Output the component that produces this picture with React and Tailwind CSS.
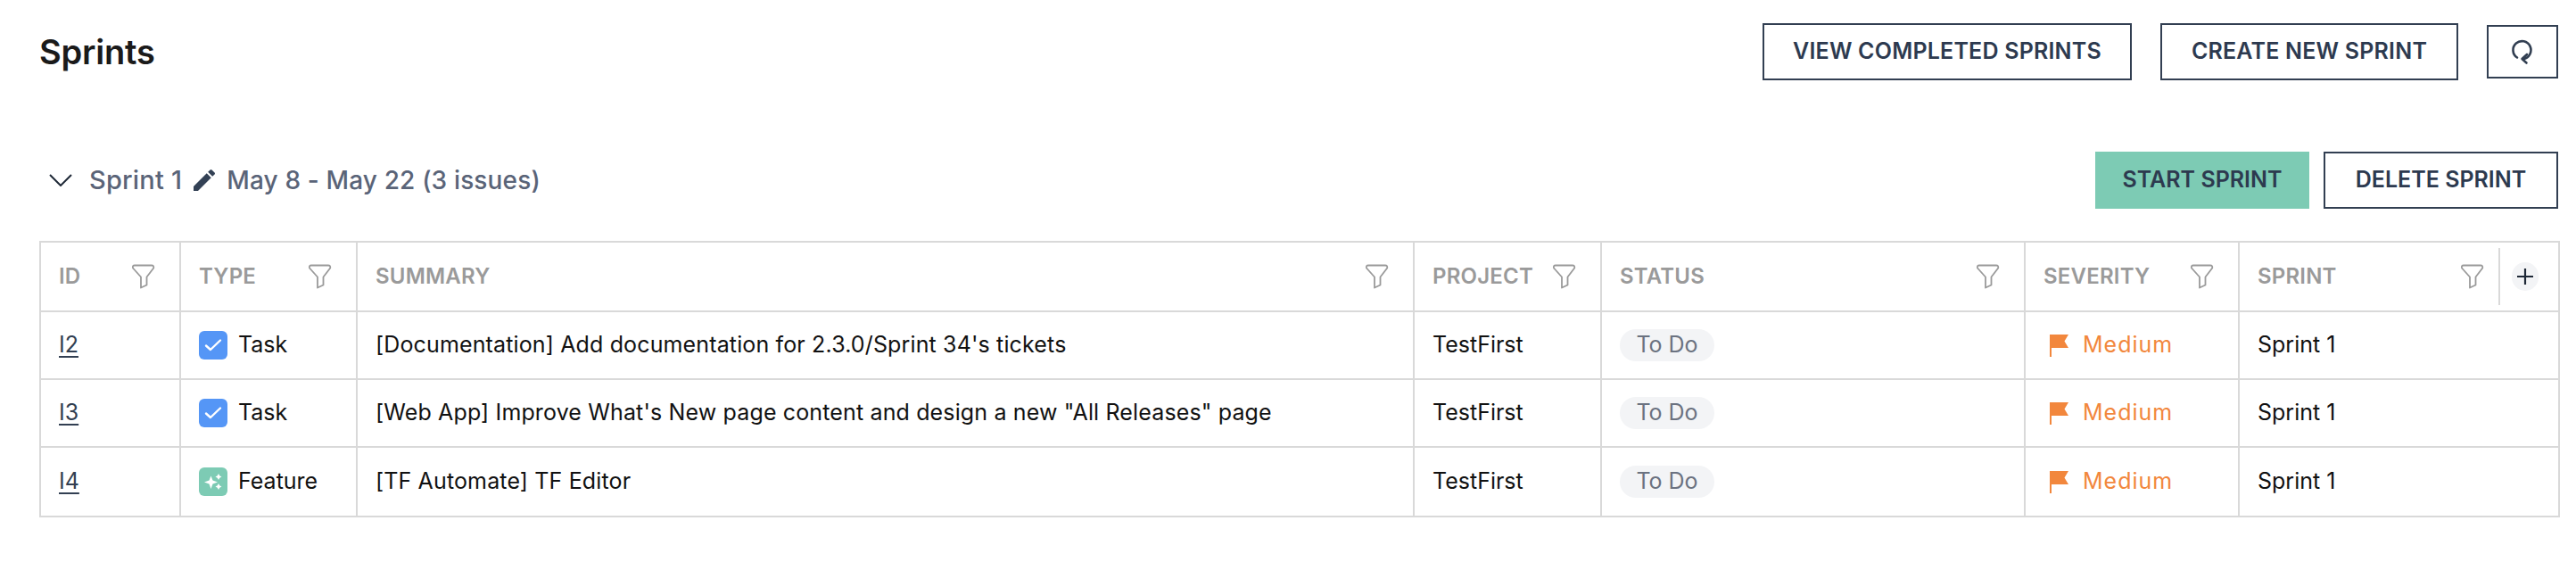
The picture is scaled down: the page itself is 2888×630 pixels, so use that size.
import React from 'react';

const rows = [
    { id: 'I2', type: 'Task', summary: "[Documentation] Add documentation for 2.3.0/Sprint 34's tickets" },
    { id: 'I3', type: 'Task', summary: `[Web App] Improve What's New page content and design a new "All Releases" page` },
    { id: 'I4', type: 'Feature', summary: '[TF Automate] TF Editor' },
];

const FilterIcon = () => (
    <svg width="27" height="28" viewBox="0 0 27 28" fill="none" stroke="#9a9a9a" strokeWidth="1.8" strokeLinejoin="round" className="shrink-0">
        <path d="M4 1.5H23Q25.8 1.5 25.2 4.5L17.5 14.5V23.5L11 26.5V14.5L2 4.5Q1.2 1.5 4 1.5Z" />
    </svg>
);

const TaskIcon = () => (
    <span className="w-8 h-8 rounded-md bg-[#5596f6] flex items-center justify-center shrink-0">
        <svg width="20" height="16" viewBox="0 0 20 16" fill="none" stroke="#fff" strokeWidth="2.4" strokeLinecap="round" strokeLinejoin="round">
            <path d="M2 8.5L7 13L18 2.5" />
        </svg>
    </span>
);

const FeatureIcon = () => (
    <span className="w-8 h-8 rounded-md bg-[#7dcbb4] flex items-center justify-center shrink-0">
        <svg width="20" height="18" viewBox="0 0 20 18" fill="#fff">
            <path d="M7.5 2.5L9.5 7.5L15 9.5L9.5 11.5L7.5 17L5.5 11.5L0 9.5L5.5 7.5Z" />
            <path d="M16 0L17.2 2.3L19.5 3.5L17.2 4.7L16 7L14.8 4.7L12.5 3.5L14.8 2.3Z" />
            <path d="M16 11L17.2 13.3L19.5 14.5L17.2 15.7L16 18L14.8 15.7L12.5 14.5L14.8 13.3Z" />
        </svg>
    </span>
);

const FlagIcon = () => (
    <svg width="21" height="25" viewBox="0 0 21 25" fill="#f2873d" className="shrink-0">
        <path d="M0 0H21L16.5 7.5L21 15H2V25H0Z" />
    </svg>
);

const HeaderCell = ({ label, last }) => (
    <th className="border-2 border-[#d9d9d9] p-0 font-semibold">
        <div className={`h-[76px] flex items-center justify-between ${last ? 'pl-[20px] pr-[0px]' : 'pl-[20px] pr-[27px]'}`}>
            <span className="text-[24px] text-[#9a9a9a] tracking-[0.2px]">{label}</span>
            <div className="flex items-center">
                <FilterIcon />
                {last && (
                    <div className="flex items-center h-16 ml-4 pl-[13px] pr-[22px] border-l-2 border-[#d9d9d9]">
                        <span className="w-[30px] h-8 rounded-full bg-gray-100 flex items-center justify-center">
                            <svg width="18" height="18" viewBox="0 0 18 18" stroke="#1f2937" strokeWidth="2.2">
                                <path d="M9 0V18M0 9H18" />
                            </svg>
                        </span>
                    </div>
                )}
            </div>
        </div>
    </th>
);

const OutlineButton = ({ width, children }) => (
    <button className={`h-16 ${width} border-2 border-[#323f52] text-[#2d3a4f] text-[25px] font-semibold tracking-[0.2px] uppercase`}>
        {children}
    </button>
);

export default function App() {
    return (
        <div className="w-[2888px] h-[630px] bg-white pl-11 pr-5 pt-[26px] font-['Inter',sans-serif] overflow-hidden">
            <div className="flex items-center justify-between">
                <h1 className="text-[38px] font-semibold text-[#1a1a1a] tracking-[-0.2px]">Sprints</h1>
                <div className="flex items-center gap-8">
                    <OutlineButton width="w-[414px]">View completed sprints</OutlineButton>
                    <OutlineButton width="w-[334px]">Create new sprint</OutlineButton>
                    <button className="w-20 h-[60px] border-2 border-[#323f52] flex items-center justify-center">
                        <svg width="26" height="30" viewBox="0 0 26 30" fill="none" stroke="#323f52" strokeWidth="2.6" strokeLinecap="round" strokeLinejoin="round">
                            <path d="M7 21.5A10 10 0 1 1 14 23" />
                            <path d="M18 18L12.5 23L17.5 27.5" />
                        </svg>
                    </button>
                </div>
            </div>

            <div className="flex items-center justify-between mt-20 mb-9 h-16">
                <div className="flex items-center pl-[11px]">
                    <svg width="26" height="14" viewBox="0 0 26 14" fill="none" stroke="#1f2937" strokeWidth="2" className="mr-[19px]">
                        <path d="M1 1L13 13L25 1" />
                    </svg>
                    <span className="text-[29px] font-medium text-[#5a6478] tracking-[0.2px]">Sprint 1</span>
                    <svg width="32" height="32" viewBox="0 0 24 24" fill="#334155" className="ml-[9px] mr-[9px]">
                        <path d="M3 17.25V21h3.75L17.81 9.94l-3.75-3.75L3 17.25zM20.71 7.04c.39-.39.39-1.02 0-1.41l-2.34-2.34a.9959.9959 0 0 0-1.41 0l-1.83 1.83 3.75 3.75 1.83-1.83z" />
                    </svg>
                    <span className="text-[28px] font-medium text-[#5a6478] tracking-[0.15px]">May 8 - May 22 (3 issues)</span>
                </div>
                <div className="flex items-center gap-4">
                    <button className="h-16 w-[240px] bg-[#7dcbb4] text-[#2d3a4f] text-[25px] font-semibold uppercase">Start sprint</button>
                    <button className="h-16 w-[263px] border-2 border-[#323f52] text-[#2d3a4f] text-[25px] font-semibold uppercase">Delete sprint</button>
                </div>
            </div>

            <table className="w-[2824px] table-fixed border-collapse text-left">
                <colgroup>
                    <col className="w-[157px]" />
                    <col className="w-[198px]" />
                    <col className="w-[1185px]" />
                    <col className="w-[210px]" />
                    <col className="w-[475px]" />
                    <col className="w-[240px]" />
                    <col className="w-[359px]" />
                </colgroup>
                <thead>
                    <tr>
                        <HeaderCell label="ID" />
                        <HeaderCell label="TYPE" />
                        <HeaderCell label="SUMMARY" />
                        <HeaderCell label="PROJECT" />
                        <HeaderCell label="STATUS" />
                        <HeaderCell label="SEVERITY" />
                        <HeaderCell label="SPRINT" last />
                    </tr>
                </thead>
                <tbody>
                    {rows.map((row, idx) => (
                        <tr key={row.id} className={`text-[25px] text-[#111] ${idx === 2 ? 'h-[78px]' : 'h-[76px]'}`}>
                            <td className="border-2 border-[#d9d9d9] pl-[20px]">
                                <a className="underline underline-offset-4 text-[#323f52]">{row.id}</a>
                            </td>
                            <td className="border-2 border-[#d9d9d9] pl-5">
                                <div className="flex items-center gap-3">
                                    {row.type === 'Task' ? <TaskIcon /> : <FeatureIcon />}
                                    <span>{row.type}</span>
                                </div>
                            </td>
                            <td className="border-2 border-[#d9d9d9] pl-[20px] truncate tracking-[0.14px]">{row.summary}</td>
                            <td className="border-2 border-[#d9d9d9] pl-[20px]">TestFirst</td>
                            <td className="border-2 border-[#d9d9d9] pl-[20px]">
                                <span className="inline-flex items-center justify-center w-[106px] h-9 rounded-[18px] bg-[#f3f4f6] text-[#6b7280]">To Do</span>
                            </td>
                            <td className="border-2 border-[#d9d9d9] pl-[27px]">
                                <div className="flex items-center gap-[16px] text-[#f2873d] tracking-[1px]">
                                    <FlagIcon />
                                    <span>Medium</span>
                                </div>
                            </td>
                            <td className="border-2 border-[#d9d9d9] pl-[20px]">Sprint 1</td>
                        </tr>
                    ))}
                </tbody>
            </table>
        </div>
    );
}
